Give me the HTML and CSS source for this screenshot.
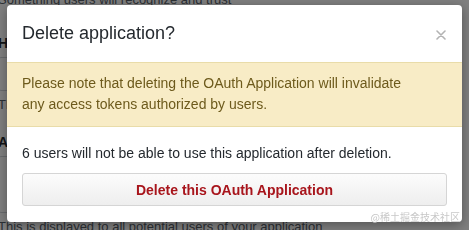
FILE: index.html
```html
<!DOCTYPE html>
<html lang="en">
<head>
  <meta charset="UTF-8">
  <meta name="viewport" content="width=device-width, initial-scale=1.0">
  <title>Delete application</title>
  <link rel="stylesheet" href="styles.css">
</head>
<body>
  <!-- settings form behind the dialog -->
  <div class="page">
    <p class="note first">Something users will recognize and trust</p>
    <label class="label">Homepage URL</label>
    <div class="field"></div>
    <p class="note">The full URL to your application homepage</p>
    <label class="label second">Application description</label>
    <div class="field area"></div>
    <p class="note">This is displayed to all potential users of your application</p>
  </div>

  <div class="modal-overlay"></div>
  <div class="modal">
    <div class="modal-header">
      <h3 class="modal-title">Delete application?</h3>
      <button class="modal-close" aria-label="Close">
        <svg width="10" height="10" viewBox="0 0 10 10">
          <path d="M1 1L9 9M9 1L1 9" stroke="#b3b3b3" stroke-width="1.6" stroke-linecap="round"/>
        </svg>
      </button>
    </div>
    <div class="flash-warn">
      Please note that deleting the OAuth Application will invalidate<br>
      any access tokens authorized by users.
    </div>
    <div class="modal-body">
      <p class="modal-text">6 users will not be able to use this application after deletion.</p>
      <button class="btn-danger">Delete this OAuth Application</button>
    </div>
  </div>

  <div class="watermark">@稀土掘金技术社区</div>
</body>
</html>
```

FILE: styles.css
```css
body {
  margin: 0;
  background-color: #fff;
  font-family: "Liberation Sans", Arial, sans-serif;
  overflow: hidden;
  height: 230px;
}
/* Page behind the dialog */
.page {
  margin: -9px 0 0 -2px;
}
.note {
  margin: 0;
  font-size: 13px;
  line-height: 18px;
  color: #586069;
  white-space: nowrap;
}
.label {
  display: block;
  margin-top: 25px;
  font-size: 14px;
  font-weight: bold;
  line-height: 18px;
  color: #24292e;
}
.label.second {
  margin-top: 19px;
}
.field {
  height: 32px;
  margin: 5px 0;
  border: 1px solid #d1d5da;
  border-radius: 3px;
  width: 440px;
}
.field.area {
  height: 55px;
}
/* Modal styling */
.modal-overlay {
  position: fixed;
  top: 0;
  left: 0;
  width: 100%;
  height: 100%;
  background-color: rgba(0, 0, 0, 0.5);
  z-index: 999;
}
.modal {
  position: fixed;
  top: 5px;
  left: 7px;
  width: 455px;
  background-color: #fff;
  border-radius: 4px;
  box-shadow: 0 3px 12px rgba(0, 0, 0, 0.35);
  z-index: 1000;
  overflow: hidden;
  color: #24292e;
}
.modal-header {
  display: flex;
  justify-content: space-between;
  align-items: center;
  padding: 16px 16px 16px 15px;
}
.modal-title {
  margin: 0;
  font-size: 18px;
  font-weight: normal;
  line-height: 25px;
}
.modal-close {
  display: flex;
  padding: 0;
  margin-top: 2px;
  border: none;
  background: none;
  cursor: pointer;
}
.flash-warn {
  padding: 10px 15px 11px;
  background-color: #f8ecc6;
  border-top: 1px solid #e9dca9;
  border-bottom: 1px solid #e9dca9;
  color: #6d5a1c;
  font-size: 14px;
  line-height: 21px;
}
.modal-body {
  padding: 16px 15px 16px;
}
.modal-text {
  margin: 0 0 10px;
  font-size: 14px;
  line-height: 20px;
}
.btn-danger {
  display: block;
  width: 100%;
  height: 33px;
  padding: 0;
  font-family: inherit;
  font-size: 14px;
  font-weight: bold;
  color: #a8151c;
  background-image: linear-gradient(#fcfcfc, #eeeeee);
  border: 1px solid #d5d5d5;
  border-radius: 3px;
  cursor: pointer;
}
.btn-danger:hover {
  color: #fff;
  background: #cb2431;
}
.watermark {
  position: fixed;
  right: 9px;
  bottom: 7px;
  font-family: "Noto Sans CJK SC", sans-serif;
  font-size: 10px;
  line-height: 12px;
  color: #c8c8c8;
  z-index: 1001;
}
```
